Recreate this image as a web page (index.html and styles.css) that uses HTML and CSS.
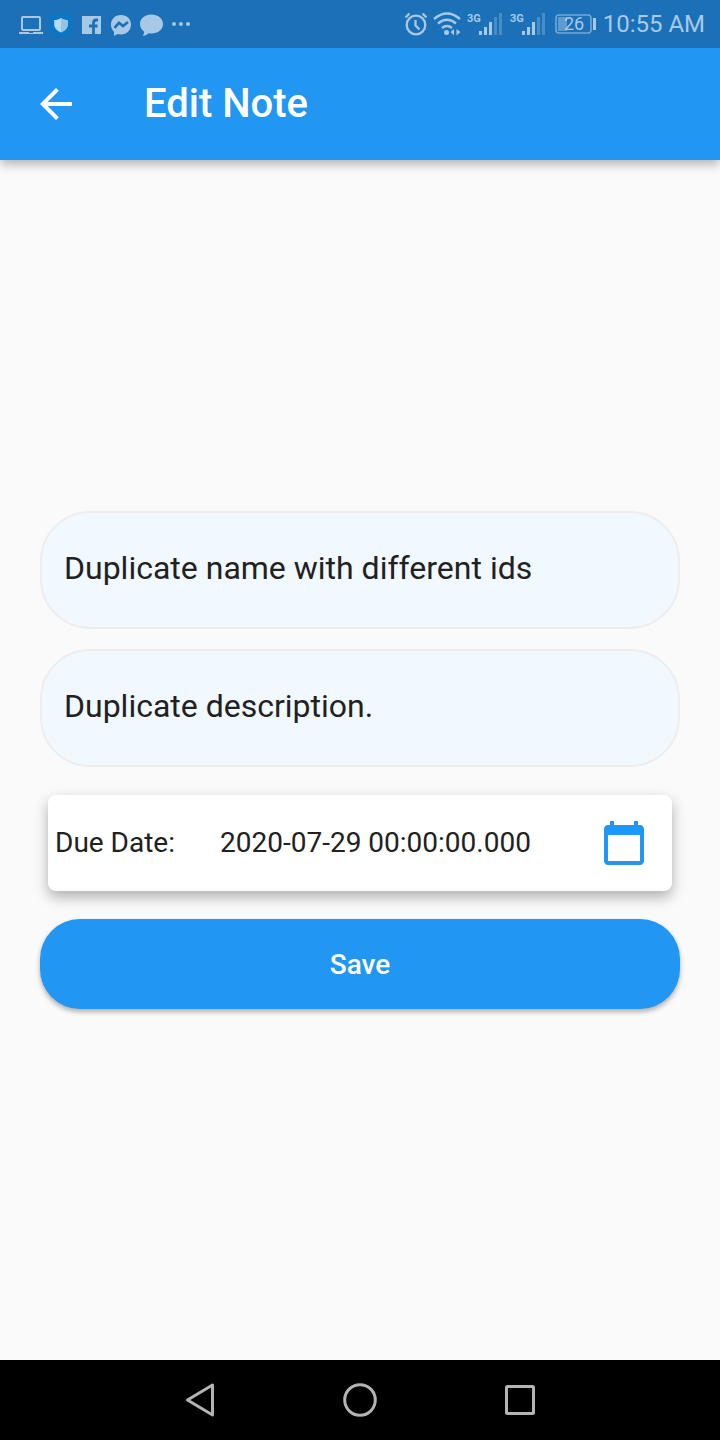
FILE: index.html
```html
<!DOCTYPE html>
<html lang="en">
<head>
<meta charset="utf-8">
<meta name="viewport" content="width=device-width, initial-scale=1">
<title>Edit Note</title>
<link rel="stylesheet" href="styles.css">
</head>
<body class="screen">
  <div class="status-bar">
    <div class="status-group">
      <svg class="status-icon" width="24" height="24" viewBox="0 0 24 24" aria-hidden="true">
        <rect x="3" y="5" width="18" height="13" rx="1" fill="none" stroke="currentColor" stroke-width="2"/>
        <path d="M0 20h24v2H0z" fill="currentColor"/><path d="M10 20h4v1h-4z" fill="#1b70b7"/>
      </svg>
      <svg class="status-icon" width="24" height="24" viewBox="0 0 24 24" aria-hidden="true">
        <rect x="1" y="2" width="22" height="22" rx="4" fill="#0b76c3"/>
        <path d="M12 6c-2 1.500-4 2-6.800 2v4.500c0 3.700 3 6.200 6.800 8 3.800-1.800 6.800-4.300 6.800-8V8C16 8 14 7.500 12 6z" fill="#b9d9ef"/>
        <path d="M12 6v14.500c3.800-1.800 6.800-4.300 6.800-8V8C16 8 14 7.500 12 6z" fill="#94c3e5"/>
      </svg>
      <svg class="status-icon" width="24" height="24" viewBox="0 0 24 24" aria-hidden="true">
        <rect x="3" y="4" width="19" height="18" fill="currentColor"/>
        <path d="M14.500 22V11q0-3 3-3H19M10 14h8.500" fill="none" stroke="#1b70b7" stroke-width="2.800"/>
      </svg>
      <svg class="status-icon" width="24" height="24" viewBox="0 0 24 24" aria-hidden="true">
        <path fill="currentColor" d="M12 3C6 3 2 7.200 2 12.500c0 3 1 5.500 3 7.200V24l3.500-2c1 .3 2.200.5 3.500.5 6 0 10-4.500 10-10S18 3 12 3z"/>
        <path d="M5.500 15.800l4.500-5 4 3.200 5-4" fill="none" stroke="#1b70b7" stroke-width="2.600"/>
      </svg>
      <svg class="status-icon" width="24" height="24" viewBox="0 0 24 24" aria-hidden="true">
        <path fill="currentColor" d="M12.500 2.500C6 2.500 1 6.500 1 12c0 3.500 2 6 4 7.500.3 2-.5 3.200-1.500 4.200 2.500.2 4.500-.7 6-2.400 1 .2 2 .2 3 .2C19 21.500 24 17.500 24 12S19 2.500 12.500 2.500z"/>
      </svg>
      <svg class="status-icon" width="24" height="24" viewBox="0 0 24 24" aria-hidden="true">
        <g fill="currentColor"><circle cx="5" cy="12" r="2"/><circle cx="12" cy="12" r="2"/><circle cx="19" cy="12" r="2"/></g>
      </svg>
    </div>
    <div class="status-group">
      <svg class="status-icon" width="24" height="24" viewBox="0 0 24 24" role="img" aria-label="Alarm">
        <g fill="none" stroke="currentColor" stroke-width="2.300"><circle cx="13" cy="13" r="9.300"/><path d="M12.500 8v5.500l4 4M2.500 5.500l4-4M23.500 5.500l-4-4"/></g>
      </svg>
      <svg class="status-icon" width="28" height="24" viewBox="0 0 28 24" role="img" aria-label="Wi-Fi">
        <g fill="none" stroke="currentColor" stroke-width="2.400"><path d="M1 7q13-11 26 0M5 11.500q9-7.500 18 0M9 16q5-4 10 0"/></g>
        <circle cx="13.500" cy="20.500" r="2.500" fill="currentColor"/>
        <path fill="currentColor" d="M21 17v6.500L17.500 20zM23.500 17v6.500l4-3.500z"/>
      </svg>
      <svg class="status-icon" width="37" height="24" viewBox="0 0 37 24" role="img" aria-label="3G signal">
        <text class="network" x="0" y="10">3G</text>
        <path fill="currentColor" d="M12 19h3v4h-3zM17 15h3v8h-3zM22 10h3v13h-3z"/>
        <path class="weak" d="M27 5h3v18h-3zM32 1h3v22h-3z"/>
      </svg>
      <svg class="status-icon" width="37" height="24" viewBox="0 0 37 24" role="img" aria-label="3G signal">
        <text class="network" x="0" y="10">3G</text>
        <path fill="currentColor" d="M12 19h3v4h-3zM17 15h3v8h-3zM22 10h3v13h-3z"/>
        <path class="weak" d="M27 5h3v18h-3zM32 1h3v22h-3z"/>
      </svg>
      <svg class="status-icon" width="44" height="24" viewBox="0 0 44 24" role="img" aria-label="Battery 26 percent">
        <rect x="3" y="3" width="35" height="18" rx="3" fill="none" stroke="#71a9d7" stroke-width="1.600"/>
        <path d="M5 5h9v14H5z" fill="#5f9bcd"/>
        <path d="M40 6h3v12h-3z" fill="currentColor"/>
        <text class="charge" x="21" y="18" text-anchor="middle">26</text>
      </svg>
      <time class="clock" datetime="10:55">10:55 AM</time>
    </div>
  </div>

  <header class="app-bar">
    <button class="back" type="button" aria-label="Back">
      <svg width="48" height="48" viewBox="0 0 24 24" aria-hidden="true"><path fill="currentColor" d="M20 11H7.830l5.590-5.590L12 4l-8 8 8 8 1.410-1.410L7.830 13H20v-2z"/></svg>
    </button>
    <h1 class="title">Edit Note</h1>
  </header>

  <main class="content">
    <form class="note-form">
      <input class="field" type="text" aria-label="Note name" value="Duplicate name with different ids">
      <input class="field" type="text" aria-label="Note description" value="Duplicate description.">
      <div class="due-card">
        <label class="due-label" for="due">Due Date:</label>
        <output class="due-value" id="due">2020-07-29 00:00:00.000</output>
        <button class="pick-date" type="button" aria-label="Pick date">
          <svg width="48" height="48" viewBox="0 0 24 24" aria-hidden="true"><path fill="currentColor" d="M20 3h-1V1h-2v2H7V1H5v2H4c-1.100 0-2 .9-2 2v16c0 1.100.9 2 2 2h16c1.100 0 2-.9 2-2V5c0-1.100-.9-2-2-2zm0 18H4V8h16v13z"/></svg>
        </button>
      </div>
      <button class="save" type="button">Save</button>
    </form>
  </main>

  <nav class="nav-bar" aria-label="System">
    <button class="nav-button" type="button" aria-label="Back">
      <svg width="40" height="40" viewBox="0 0 40 40" aria-hidden="true"><path d="M32.500 5v30L7.500 20z"/></svg>
    </button>
    <button class="nav-button" type="button" aria-label="Home">
      <svg width="40" height="40" viewBox="0 0 40 40" aria-hidden="true"><circle cx="20" cy="20" r="15.300"/></svg>
    </button>
    <button class="nav-button" type="button" aria-label="Recent apps">
      <svg width="40" height="40" viewBox="0 0 40 40" aria-hidden="true"><rect x="6.500" y="6.500" width="27" height="27" rx="1"/></svg>
    </button>
  </nav>
</body>
</html>
```
FILE: styles.css
```css
*, *::before, *::after { box-sizing: border-box; }

.screen {
  display: flex;
  flex-direction: column;
  min-height: 100vh;
  margin: 0;
  background: #fafafa;
  color: #212121;
  font-family: Roboto, "Liberation Sans", sans-serif;
}

button {
  border: 0;
  padding: 0;
  background: none;
  font-family: inherit;
  cursor: pointer;
}

svg { display: block; flex: none; }

.status-bar {
  position: relative;
  z-index: 1;
  display: flex;
  align-items: center;
  justify-content: space-between;
  height: 48px;
  padding: 0 15px 0 19px;
  background: #1b70b7;
  color: #a7c9e6;
}

.status-group { display: flex; align-items: center; gap: 6px; }
.network { fill: currentColor; font-size: 11px; font-weight: 700; }
.charge { fill: currentColor; font-size: 18px; }
.weak { fill: #478dc7; }
.clock { font-size: 24px; line-height: 32px; white-space: nowrap; }

.app-bar {
  display: flex;
  align-items: center;
  gap: 64px;
  height: 112px;
  padding: 0 32px;
  background: #2196f3;
  color: #fff;
  box-shadow: 0 4px 10px rgba(0, 0, 0, 0.3);
}

.back { color: inherit; }
.title { margin: 0; font-size: 40px; font-weight: 500; line-height: 48px; }

.content {
  display: flex;
  flex: 1;
  flex-direction: column;
  justify-content: center;
  padding: 0 40px;
}

.note-form { display: flex; flex-direction: column; gap: 20px; }

.field {
  width: 100%;
  height: 118px;
  padding: 0 22px 4px;
  border: 2px solid #ededed;
  border-radius: 50px;
  background: #f1f8fe;
  color: #212121;
  font-family: inherit;
  font-size: 32px;
}

.due-card {
  display: flex;
  align-items: center;
  margin: 8px;
  padding-left: 7px;
  border-radius: 8px;
  background: #fff;
  box-shadow: 0 6px 14px rgba(0, 0, 0, 0.3);
  font-size: 28px;
  line-height: 34px;
}

.due-value { flex: 1; text-align: center; }

.pick-date {
  display: grid;
  place-items: center;
  width: 96px;
  height: 96px;
  color: #2196f3;
}

.save {
  height: 90px;
  border-radius: 40px;
  background: #2196f3;
  box-shadow: 0 3px 5px rgba(0, 0, 0, 0.3);
  color: #fff;
  font-size: 28px;
  font-weight: 500;
}

.nav-bar {
  display: flex;
  justify-content: center;
  gap: 80px;
  background: #000;
}

.nav-button {
  display: grid;
  place-items: center;
  width: 80px;
  height: 80px;
}

.nav-button svg {
  fill: none;
  stroke: #b3b3b3;
  stroke-width: 3;
  stroke-linejoin: round;
}
```
